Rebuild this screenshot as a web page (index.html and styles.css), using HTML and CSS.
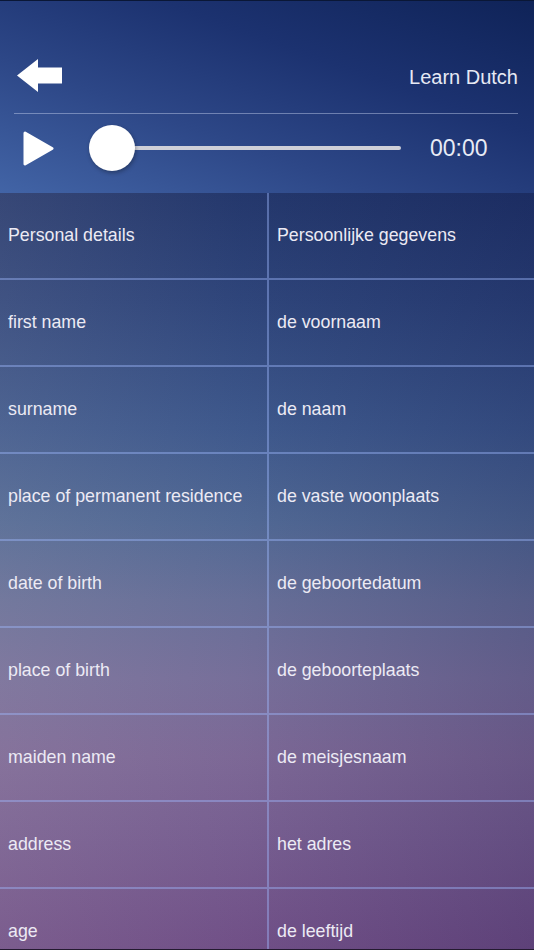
FILE: index.html
```html
<!DOCTYPE html>
<html>
<head>
<meta charset="utf-8">
<link rel="stylesheet" href="styles.css">
</head>
<body>
<div class="app">
  <header class="header">
    <div class="topbar">
      <svg class="back" viewBox="0 0 46 33" width="46" height="33"><polygon points="0,16.5 21,0 21,8.5 45,8.5 45,24.5 21,24.5 21,33" fill="#ffffff"/></svg>
      <div class="title">Learn Dutch</div>
    </div>
    <div class="rule"></div>
    <div class="player">
      <svg class="play" viewBox="0 0 31 35" width="31" height="35"><polygon points="2,2 29,17.5 2,33" fill="#ffffff" stroke="#ffffff" stroke-width="3" stroke-linejoin="round"/></svg>
      <div class="slider">
        <div class="track"></div>
        <div class="knob"></div>
      </div>
      <div class="time">00:00</div>
    </div>
  </header>
  <div class="table">
    <div class="cell left">Personal details</div><div class="cell right">Persoonlijke gegevens</div>
    <div class="cell left">first name</div><div class="cell right">de voornaam</div>
    <div class="cell left">surname</div><div class="cell right">de naam</div>
    <div class="cell left">place of permanent residence</div><div class="cell right">de vaste woonplaats</div>
    <div class="cell left">date of birth</div><div class="cell right">de geboortedatum</div>
    <div class="cell left">place of birth</div><div class="cell right">de geboorteplaats</div>
    <div class="cell left">maiden name</div><div class="cell right">de meisjesnaam</div>
    <div class="cell left">address</div><div class="cell right">het adres</div>
    <div class="cell left">age</div><div class="cell right">de leeftijd</div>
  </div>
</div>
</body>
</html>
```

FILE: styles.css
```css
html, body {
  margin: 0;
  padding: 0;
}
body {
  width: 534px;
  height: 950px;
  overflow: hidden;
  font-family: "Liberation Sans", Arial, sans-serif;
  background: #10204a;
}
.app {
  width: 534px;
  height: 950px;
  overflow: hidden;
  display: flex;
  flex-direction: column;
  box-sizing: border-box;
  border-top: 1px solid #0a1736;
  border-bottom: 1px solid #241a30;
}
.header {
  flex: 0 0 auto;
  height: 192px;
  box-sizing: border-box;
  padding: 0 16px 0 14px;
  background: linear-gradient(to top right, #4264a6 0%, #2d4787 35%, #1c3270 65%, #0f2358 100%);
  display: flex;
  flex-direction: column;
}
.topbar {
  height: 112px;
  display: flex;
  align-items: center;
  justify-content: space-between;
  padding-top: 37px;
  box-sizing: border-box;
}
.back {
  display: block;
  margin-left: 3px;
}
.title {
  color: #e6e9f4;
  font-size: 20px;
  margin-top: 3px;
}
.rule {
  height: 1px;
  background: rgba(200, 210, 240, 0.45);
}
.player {
  height: 68px;
  display: flex;
  align-items: center;
}
.play {
  display: block;
  margin-left: 9px;
  margin-top: 1px;
}
.slider {
  position: relative;
  width: 312px;
  height: 46px;
  margin-left: 35px;
  display: flex;
  align-items: center;
}
.track {
  flex: 1;
  height: 4px;
  margin-left: 23px;
  background: #cfd0d8;
  border-radius: 2px;
}
.knob {
  position: absolute;
  left: 0;
  top: 0;
  width: 46px;
  height: 46px;
  border-radius: 50%;
  background: #ffffff;
  box-shadow: 1px 2px 4px rgba(0, 0, 0, 0.3);
}
.time {
  margin-left: 29px;
  color: #e8ebf5;
  font-size: 23px;
}
.table {
  flex: 1;
  display: grid;
  grid-template-columns: 269px 1fr;
  grid-auto-rows: 87px;
  background:
    linear-gradient(to right, rgba(215, 205, 205, 0.13) 0%, rgba(200, 200, 210, 0.03) 45%, rgba(10, 10, 60, 0.16) 100%),
    linear-gradient(to bottom, #1f3369 0%, #2a4178 14%, #3a558a 30%, #4d6592 42%, #646c96 52%, #746c98 62%, #7a6594 72%, #745a8e 83%, #6c4882 100%);
}
.cell {
  box-sizing: border-box;
  display: flex;
  align-items: center;
  padding-left: 8px;
  color: #eceaf4;
  font-size: 17.8px;
  border-bottom: 2px solid rgba(160, 185, 255, 0.42);
  white-space: nowrap;
}
.left {
  border-right: 2px solid rgba(160, 185, 255, 0.42);
}
```
